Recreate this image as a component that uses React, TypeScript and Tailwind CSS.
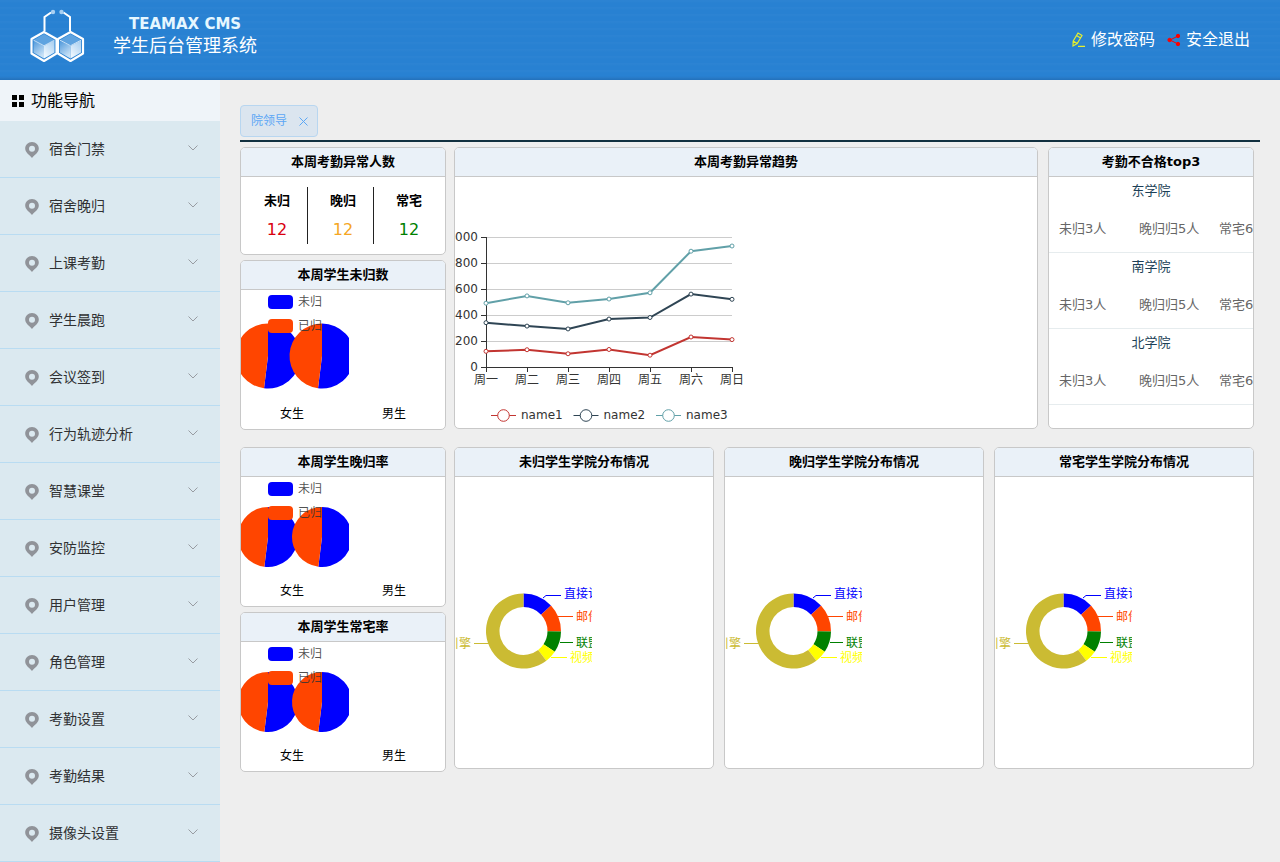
import React, { useState } from 'react';

const MENU = [
  '宿舍门禁',
  '宿舍晚归',
  '上课考勤',
  '学生晨跑',
  '会议签到',
  '行为轨迹分析',
  '智慧课堂',
  '安防监控',
  '用户管理',
  '角色管理',
  '考勤设置',
  '考勤结果',
  '摄像头设置',
];

const STATS = [
  { label: '未归', value: 12, color: 'text-[#d9000f]', border: 'border-[#222]' },
  { label: '晚归', value: 12, color: 'text-[#f5a623]', border: 'border-[#222]' },
  { label: '常宅', value: 12, color: 'text-[#008000]', border: 'border-transparent' },
];

const WEEK = ['周一', '周二', '周三', '周四', '周五', '周六', '周日'];

// values are already stacked
const SERIES = [
  { name: 'name1', color: '#c23531', data: [120, 132, 101, 134, 90, 230, 210] },
  { name: 'name2', color: '#2f4554', data: [340, 314, 292, 368, 380, 560, 520] },
  { name: 'name3', color: '#61a0a8', data: [490, 546, 493, 522, 570, 890, 930] },
];

const COLLEGES = ['东学院', '南学院', '北学院'];

const SOURCES = [
  { name: '直接访问', value: 335, color: '#0000ff', line: '88,121 91,118.5 106,118.5', x: 109, y: 121 },
  { name: '邮件营销', value: 310, color: '#ff4500', line: '103,139.5 118,139.5', x: 121, y: 144 },
  { name: '联盟广告', value: 234, color: '#008000', line: '105,165.5 118,165.5', x: 121, y: 170 },
  { name: '视频广告', value: 135, color: '#ffff00', line: '96,180.5 112,180.5', x: 115, y: 185 },
  { name: '搜索引擎', value: 1548, color: '#cbbb33', line: '34,166.5 19,166.5', x: 16, y: 171 },
];

function polar(cx: number, cy: number, r: number, angle: number) {
  const rad = ((angle - 90) * Math.PI) / 180;
  return `${cx + r * Math.cos(rad)} ${cy + r * Math.sin(rad)}`;
}

function slicePath(cx: number, cy: number, r: number, from: number, to: number, inner = 0) {
  const large = to - from > 180 ? 1 : 0;
  const outer = `M${polar(cx, cy, r, from)} A${r} ${r} 0 ${large} 1 ${polar(cx, cy, r, to)}`;
  if (inner === 0) return `${outer} L${cx} ${cy} Z`;
  return `${outer} L${polar(cx, cy, inner, to)} A${inner} ${inner} 0 ${large} 0 ${polar(cx, cy, inner, from)} Z`;
}

function Logo() {
  return (
    <svg width="55" height="54" viewBox="0 0 55 54" fill="none" aria-hidden="true">
      <defs>
        <linearGradient id="left" x1="0" y1="0" x2="0.5" y2="1">
          <stop offset="0" stopColor="#4d97da" />
          <stop offset="1" stopColor="#c9e2f7" />
        </linearGradient>
        <linearGradient id="right" x1="1" y1="0" x2="0.3" y2="1">
          <stop offset="0" stopColor="#a5cdf0" />
          <stop offset="1" stopColor="#eef7fe" />
        </linearGradient>
      </defs>
      {[0, 26.5].map((x) => (
        <g key={x} transform={`translate(${x} 0)`}>
          <path d="M14 23 L26.5 30 V44.5 L14 52 L1.5 44.5 V30 Z" stroke="#fff" strokeWidth="2.2" strokeLinejoin="round" />
          <path d="M14 25 L24.5 31 L14 36.5 L3.5 31 Z" fill="#5ea3e0" />
          <path d="M3.5 31.5 L14 37 V49.5 L3.5 43.5 Z" fill="url(#left)" />
          <path d="M24.5 31.5 L14 37 V49.5 L24.5 43.5 Z" fill="url(#right)" />
          <path d="M3.5 31.2 L14 36.7 L24.5 31.2" stroke="#e8f4fd" strokeWidth="0.8" />
        </g>
      ))}
      <path d="M14.5 22 V8 L21 3.5" stroke="#fff" strokeWidth="2" />
      <path d="M40 22 V8 L33.5 3.5" stroke="#fff" strokeWidth="2" />
      <circle cx="23" cy="3" r="2.2" fill="#a9d0f2" />
      <circle cx="31.5" cy="3" r="2.2" fill="#a9d0f2" />
    </svg>
  );
}

function Header() {
  return (
    <header className="flex h-20 items-center justify-between bg-[#2881d2] bg-[linear-gradient(to_top,#2371bb_0,#2881d200_4px),repeating-linear-gradient(to_bottom,#ffffff05_0,#ffffff05_1px,#ffffff00_3px,#ffffff00_7px)] pr-[30px] pl-[30px]">
      <div className="flex items-start gap-7 pb-2">
        <Logo />
        <h1 className="flex flex-col pt-px text-white">
          <span className="pl-4 text-[15px] leading-7 font-bold text-[#e6f7ff]">TEAMAX CMS</span>
          <span className="text-lg leading-4">学生后台管理系统</span>
        </h1>
      </div>
      <nav className="flex items-center gap-3 text-base text-white">
        <a href="#password" className="flex items-center gap-[5px]">
          <svg width="15" height="16" viewBox="0 0 15 16" fill="none" stroke="#e6f02e" strokeWidth="1.2" aria-hidden="true">
            <path d="M2.2 9 L7 1 L11 3.5 L6.2 11.5 L2 14 Z M5.5 3.5 L9.5 6 M2.2 9 L6.2 11.5 M7 14.4 H14" />
          </svg>
          修改密码
        </a>
        <a href="#logout" className="flex items-center gap-[5px]">
          <svg width="14" height="14" viewBox="0 0 14 14" fill="#f00" stroke="#f00" aria-hidden="true">
            <path d="M11 3 L3 7 L11 11" fill="none" strokeWidth="1" />
            <circle cx="2.6" cy="7" r="1.7" />
            <circle cx="11" cy="3" r="1.7" />
            <circle cx="11" cy="11" r="1.7" />
          </svg>
          安全退出
        </a>
      </nav>
    </header>
  );
}

function Sidebar() {
  return (
    <aside className="w-[220px] shrink-0 bg-[#dbe9f0]">
      <h2 className="flex h-[41px] items-center gap-[7px] bg-[#eff4f9] pl-3 text-base text-black">
        <svg width="12" height="12" viewBox="0 0 12 12" aria-hidden="true">
          <path d="M0 0h5v5H0z M7 0h5v5H7z M0 7h5v5H0z M7 7h5v5H7z" />
        </svg>
        功能导航
      </h2>
      <ul>
        {MENU.map((item) => (
          <li key={item} className="border-b border-[#b9dcf2]">
            <button className="flex h-14 w-full items-center pr-[22px] pl-[25px] text-sm text-[#303133]">
              <svg width="14" height="18" viewBox="0 0 14 18" fill="#909399" className="mr-[10px]" aria-hidden="true">
                <path fillRule="evenodd" d="M7 2 C11 2 13.8 5 13.8 8.6 C13.8 12.2 10.6 14.2 7 18 C3.4 14.2 0.2 12.2 0.2 8.6 C0.2 5 3 2 7 2 Z M7 5.8 A3 3 0 1 0 7 11.8 A3 3 0 1 0 7 5.8 Z" />
              </svg>
              {item}
              <svg width="10" height="8" viewBox="0 0 10 8" fill="none" stroke="#909399" strokeWidth="0.9" className="ml-auto" aria-hidden="true">
                <path d="M0.5 0.5 L5 5 L9.5 0.5" />
              </svg>
            </button>
          </li>
        ))}
      </ul>
    </aside>
  );
}

function Card({ title, children }: { title: string; children: React.ReactNode }) {
  return (
    <section className="overflow-hidden rounded-[5px] border border-[#c8c8c8] bg-white">
      <h3 className="border-b border-[#c8c8c8] bg-[#eaf1f8] text-center text-[13px] leading-7 font-bold text-black">{title}</h3>
      {children}
    </section>
  );
}

function StatsCard() {
  return (
    <Card title="本周考勤异常人数">
      <dl className="flex gap-[5px] py-[10px] pr-[5px] pl-1.5 text-center">
        {STATS.map((s) => (
          <div key={s.label} className={`flex-1 border-r ${s.border}`}>
            <dt className="text-[13px] leading-7 font-bold text-black">{s.label}</dt>
            <dd className={`text-base leading-[29px] ${s.color}`}>{s.value}</dd>
          </div>
        ))}
      </dl>
    </Card>
  );
}

function PieCard({ title, height, cy, r }: { title: string; height: number; cy: number; r: number }) {
  return (
    <Card title={title}>
      <svg width="108" height={height} className="block text-xs">
        {[27, 81].map((cx) => (
          <g key={cx}>
            <path d={slicePath(cx, cy, r, 0, 187)} fill="#0000ff" />
            <path d={slicePath(cx, cy, r, 187, 360)} fill="#ff4500" />
          </g>
        ))}
        <rect x="27" y="5" width="25" height="14" rx="4" fill="#0000ff" />
        <rect x="27" y="29" width="25" height="14" rx="4" fill="#ff4500" />
        <g fill="#333" fillOpacity="0.85">
          <text x="57" y="16">未归</text>
          <text x="57" y="40">已归</text>
        </g>
      </svg>
      <div className="grid grid-cols-2 text-center text-xs leading-[30px] text-black">
        <span>女生</span>
        <span>男生</span>
      </div>
    </Card>
  );
}

function TrendCard() {
  const px = (i: number) => 31 + i * 41;
  const py = (v: number) => 190.5 - v * 0.13;

  return (
    <Card title="本周考勤异常趋势">
      <svg width="292" height="250" className="block text-xs" fill="#333">
        {[0, 200, 400, 600, 800, 1000].map((v) => (
          <g key={v}>
            {v > 0 && <path d={`M31 ${py(v)} H277`} stroke="#ccc" />}
            <path d={`M26 ${py(v)} H31`} stroke="#333" />
            <text x="23" y={py(v) + 3} textAnchor="end">{v}</text>
          </g>
        ))}
        <path d="M31.5 60 V190.5 H277" stroke="#333" fill="none" />
        {WEEK.map((day, i) => (
          <g key={day}>
            <path d={`M${px(i) + 0.5} 190 V195`} stroke="#333" />
            <text x={px(i)} y="207" textAnchor="middle">{day}</text>
          </g>
        ))}
        {SERIES.map((s, n) => (
          <g key={s.name} stroke={s.color}>
            <polyline points={s.data.map((v, i) => `${px(i)},${py(v) - 0.6}`).join(' ')} fill="none" strokeWidth="2" />
            {s.data.map((v, i) => (
              <circle key={i} cx={px(i)} cy={py(v) - 0.6} r="2" fill="#fff" />
            ))}
            <path d={`M${36 + n * 82.5} 238.5 h25`} />
            <circle cx={48.5 + n * 82.5} cy="238.5" r="5.8" fill="#fff" />
            <text x={66 + n * 82.5} y="242" stroke="none">{s.name}</text>
          </g>
        ))}
      </svg>
    </Card>
  );
}

function TopCard() {
  return (
    <Card title="考勤不合格top3">
      <ul className="pb-[23px] text-[13px]">
        {COLLEGES.map((name) => (
          <li key={name} className="border-b border-[#e6ecee]">
            <h4 className="text-center leading-7 text-[#1c3f57]">{name}</h4>
            <div className="flex pl-[10px] leading-[47px] whitespace-nowrap text-[#666]">
              <span className="w-20 shrink-0">未归3人</span>
              <span className="w-20 shrink-0">晚归归5人</span>
              <span className="w-20 shrink-0">常宅6人</span>
            </div>
          </li>
        ))}
      </ul>
    </Card>
  );
}

function DonutCard({ title }: { title: string }) {
  const total = SOURCES.reduce((sum, s) => sum + s.value, 0);
  let angle = 0;

  return (
    <Card title={title}>
      <svg width="137" height="291" className="block text-xs">
        {SOURCES.map((s) => {
          const from = angle;
          angle += (s.value / total) * 360;
          return (
            <g key={s.name} fill={s.color}>
              <path d={slicePath(68.5, 154, 37.5, from, angle, 24)} />
              <polyline points={s.line} fill="none" stroke={s.color} />
              <text x={s.x} y={s.y} textAnchor={s.x < 68 ? 'end' : 'start'}>{s.name}</text>
            </g>
          );
        })}
      </svg>
    </Card>
  );
}

export default function App() {
  const [tabOpen, setTabOpen] = useState(true);

  return (
    <div className="min-h-screen bg-[#eee] font-['DejaVu_Sans','Noto_Sans_CJK_SC',sans-serif]">
      <Header />
      <div className="flex">
        <Sidebar />
        <main className="min-w-0 flex-1 px-5 pt-[25px]">
          <div className="flex h-[37px] items-start border-b-2 border-[#12303f]">
            {tabOpen && (
              <div className="flex h-8 items-center gap-3 rounded border border-[#b8d6f0] bg-[#dbe5ef] pr-[9px] pl-[10px] text-xs text-[#5ba7f5]">
                院领导
                <button aria-label="关闭" onClick={() => setTabOpen(false)}>
                  <svg width="9" height="9" viewBox="0 0 9 9" stroke="#5ba7f5" aria-hidden="true">
                    <path d="M0.5 0.5 L8.5 8.5 M8.5 0.5 L0.5 8.5" />
                  </svg>
                </button>
              </div>
            )}
          </div>

          <div className="flex flex-col gap-[17px] pt-[5px] pr-1.5">
            <div className="flex items-start gap-2">
              <div className="flex w-[206px] shrink-0 flex-col gap-[5px]">
                <StatsCard />
                <PieCard title="本周学生未归数" height={109} cy={66} r={32.5} />
              </div>
              <div className="grid min-w-0 flex-1 grid-cols-[minmax(0,1fr)_206px] gap-[10px]">
                <TrendCard />
                <TopCard />
              </div>
            </div>

            <div className="flex items-start gap-2">
              <div className="flex w-[206px] shrink-0 flex-col gap-[5px]">
                <PieCard title="本周学生晚归率" height={99} cy={60} r={30} />
                <PieCard title="本周学生常宅率" height={99} cy={60} r={30} />
              </div>
              <div className="grid min-w-0 flex-1 grid-cols-3 gap-[10px]">
                <DonutCard title="未归学生学院分布情况" />
                <DonutCard title="晚归学生学院分布情况" />
                <DonutCard title="常宅学生学院分布情况" />
              </div>
            </div>
          </div>
        </main>
      </div>
    </div>
  );
}
